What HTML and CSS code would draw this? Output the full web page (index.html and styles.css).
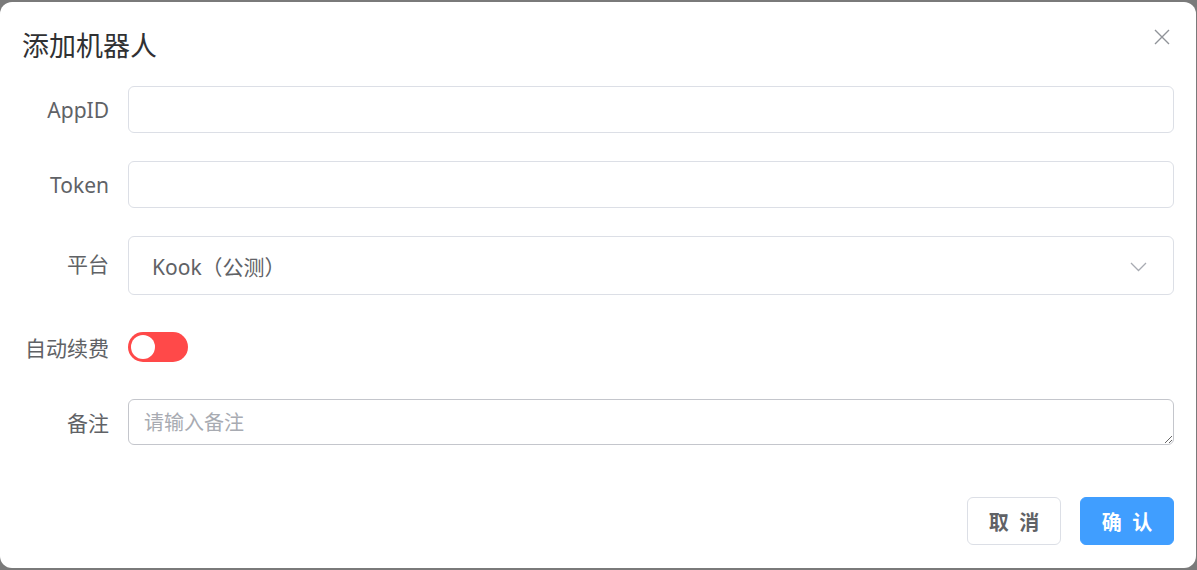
FILE: index.html
```html
<!DOCTYPE html>
<html lang="zh-CN">
<head>
<meta charset="utf-8">
<title>添加机器人</title>
<link rel="stylesheet" href="styles.css">
</head>
<body>
<div class="dialog">
  <header class="dialog-header">
    <span class="dialog-title">添加机器人</span>
    <button class="dialog-close" aria-label="关闭">
      <svg width="16" height="16" viewBox="0 0 16 16"><path d="M1 1 L15 15 M15 1 L1 15" stroke="#909399" stroke-width="1.4" fill="none"/></svg>
    </button>
  </header>
  <form class="form">
    <div class="form-item">
      <label class="form-label">AppID</label>
      <div class="form-content"><input class="input" type="text"></div>
    </div>
    <div class="form-item">
      <label class="form-label">Token</label>
      <div class="form-content"><input class="input" type="text"></div>
    </div>
    <div class="form-item">
      <label class="form-label form-label-high">平台</label>
      <div class="form-content">
        <div class="select">
          <span class="select-value">Kook（公测）</span>
          <svg class="select-arrow" width="17" height="10" viewBox="0 0 17 10"><path d="M1 1 L8.5 8.5 L16 1" stroke="#a8abb2" stroke-width="1.3" fill="none"/></svg>
        </div>
      </div>
    </div>
    <div class="form-item switch-item">
      <label class="form-label">自动续费</label>
      <div class="form-content">
        <span class="switch"><span class="switch-knob"></span></span>
      </div>
    </div>
    <div class="form-item last">
      <label class="form-label">备注</label>
      <div class="form-content"><textarea class="textarea" placeholder="请输入备注"></textarea></div>
    </div>
  </form>
  <footer class="dialog-footer">
    <button class="btn" type="button">取 消</button>
    <button class="btn btn-primary" type="button">确 认</button>
  </footer>
</div>
</body>
</html>
```
FILE: styles.css
```css
html, body {
  margin: 0;
  padding: 0;
  background: #7a7a7a;
  height: 570px;
  overflow: hidden;
}
body {
  font-family: "Noto Sans", "Noto Sans CJK SC", sans-serif;
  color: #606266;
}
.dialog {
  box-sizing: border-box;
  margin-top: 2px;
  width: 1196px;
  height: 566px;
  background: #fff;
  border-radius: 12px;
  padding: 24px 22px 23px 22px;
  position: relative;
  display: flex;
  flex-direction: column;
}
.dialog-header {
  height: 38px;
  line-height: 38px;
  margin-bottom: 22px;
}
.dialog-title {
  font-family: "Noto Sans CJK SC", sans-serif;
  font-size: 27px;
  color: #303133;
}
.dialog-close {
  position: absolute;
  top: 27px;
  right: 26px;
  width: 16px;
  height: 16px;
  padding: 0;
  border: 0;
  background: none;
  display: flex;
}
.form {
  display: flex;
  flex-direction: column;
  gap: 28px;
}
.form-item {
  display: flex;
  align-items: center;
}
.form-label {
  box-sizing: border-box;
  width: 106px;
  padding-right: 19px;
  text-align: right;
  font-size: 21px;
  color: #606266;
  flex-shrink: 0;
  font-family: "Noto Sans", "Noto Sans CJK SC", sans-serif;
}
.form-label-high {
  padding-bottom: 5px;
}
.form-content {
  flex: 1;
  display: flex;
  align-items: center;
}
.input {
  box-sizing: border-box;
  width: 100%;
  height: 47px;
  border: 1px solid #dcdfe6;
  border-radius: 6px;
  padding: 0 16px;
  font-size: 20px;
  outline: none;
}
.select {
  box-sizing: border-box;
  width: 100%;
  height: 59px;
  border: 1px solid #dcdfe6;
  border-radius: 6px;
  padding: 0 26px 0 23px;
  display: flex;
  align-items: center;
  justify-content: space-between;
}
.select-value {
  font-size: 21px;
  color: #606266;
}
.select-arrow {
  margin-top: 2px;
}
.switch-item .form-content {
  height: 47px;
}
.switch {
  box-sizing: border-box;
  width: 60px;
  height: 30px;
  border-radius: 15px;
  background: #ff4949;
  padding: 3px;
  display: flex;
}
.switch-knob {
  width: 24px;
  height: 24px;
  border-radius: 50%;
  background: #fff;
}
.form-item.last {
  margin-top: 1px;
}
.textarea {
  box-sizing: border-box;
  width: 100%;
  height: 46px;
  min-height: 46px;
  border: 1px solid #c4c6cc;
  border-radius: 6px;
  padding: 7px 15px;
  font-family: "Noto Sans CJK SC", sans-serif;
  font-size: 20px;
  line-height: 29px;
  color: #606266;
  resize: vertical;
  outline: none;
  display: block;
}
.textarea::placeholder {
  color: #a8abb2;
}
.dialog-footer {
  margin-top: auto;
  display: flex;
  justify-content: flex-end;
  gap: 19px;
}
.btn {
  box-sizing: border-box;
  width: 94px;
  height: 48px;
  border: 1px solid #dcdfe6;
  border-radius: 6px;
  background: #fff;
  color: #606266;
  font-family: "Noto Sans CJK SC", sans-serif;
  font-size: 20px;
  font-weight: 700;
  letter-spacing: 3px;
  padding: 0 0 0 3px;
}
.btn-primary {
  background: #409eff;
  border-color: #409eff;
  color: #fff;
}
```
